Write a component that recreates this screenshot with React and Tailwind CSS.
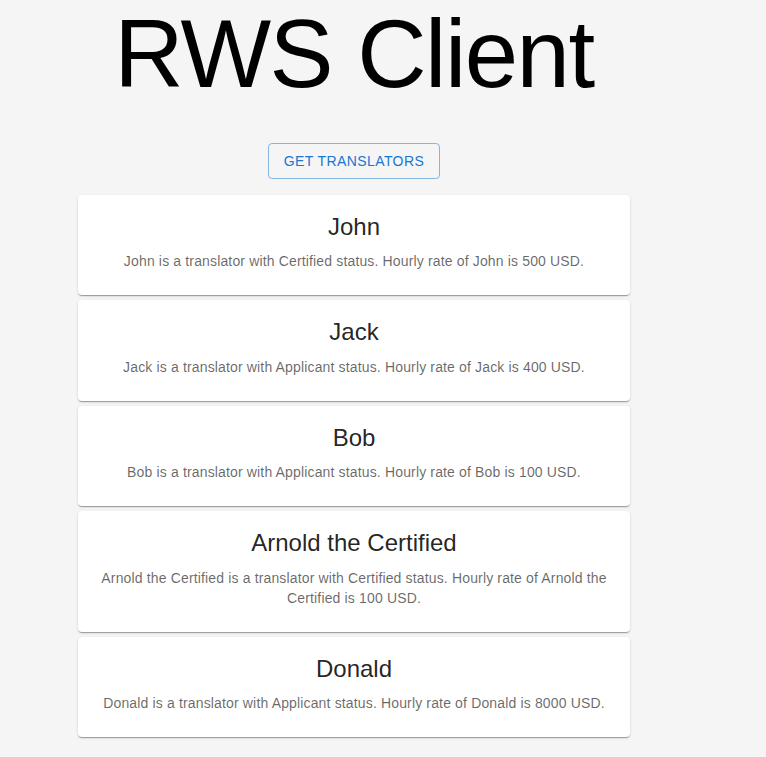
const translators = [
  { name: "John", status: "Certified", rate: 500 },
  { name: "Jack", status: "Applicant", rate: 400 },
  { name: "Bob", status: "Applicant", rate: 100 },
  { name: "Arnold the Certified", status: "Certified", rate: 100 },
  { name: "Donald", status: "Applicant", rate: 8000 },
];

function TranslatorCard({ t }) {
  return (
    <div className="bg-white rounded-[4px] shadow-[0px_2px_1px_-1px_rgba(0,0,0,0.2),0px_1px_1px_0px_rgba(0,0,0,0.14),0px_1px_3px_0px_rgba(0,0,0,0.12)] px-4 pt-4 pb-6 text-center">
      <h5 className="text-[24px] leading-[32px] text-[rgba(0,0,0,0.87)] mb-[8.4px]">{t.name}</h5>
      <p className="text-[14px] leading-[20px] tracking-[0.15px] text-[rgba(0,0,0,0.6)]">
        {t.name} is a translator with {t.status} status. Hourly rate of {t.name} is {t.rate} USD.
      </p>
    </div>
  );
}

export default function App() {
  return (
    <div className="min-h-screen bg-[#f5f5f5] font-['Liberation_Sans',Arial,sans-serif]">
      <div className="ml-[78px] w-[552px] flex flex-col items-center pb-5">
        <h1 className="text-[96px] leading-[107px] tracking-[-1.5px] text-black m-0">RWS Client</h1>
        <button className="mt-[36px] h-[36px] px-[15px] rounded-[4px] border border-[rgba(25,118,210,0.5)] text-[#1976d2] text-[14px] tracking-[0.4px] uppercase">
          Get Translators
        </button>
        <div className="mt-4 w-full flex flex-col gap-[5px]">
          {translators.map((t) => (
            <TranslatorCard key={t.name} t={t} />
          ))}
        </div>
      </div>
    </div>
  );
}
